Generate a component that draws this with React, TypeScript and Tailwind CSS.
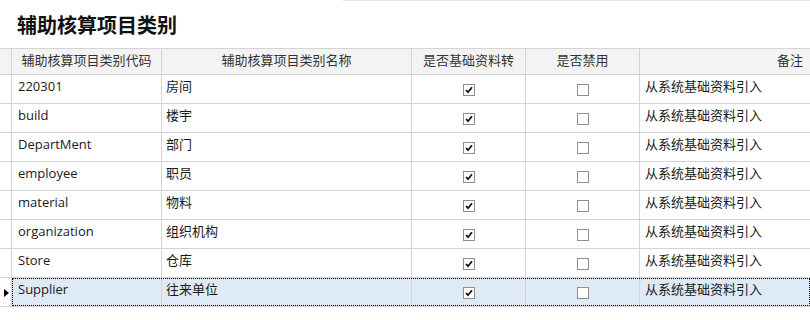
import React from "react";

type Row = { code: string; name: string; base: boolean; disabled: boolean; note: string };

const rows: Row[] = [
  { code: "220301", name: "房间", base: true, disabled: false, note: "从系统基础资料引入" },
  { code: "build", name: "楼宇", base: true, disabled: false, note: "从系统基础资料引入" },
  { code: "DepartMent", name: "部门", base: true, disabled: false, note: "从系统基础资料引入" },
  { code: "employee", name: "职员", base: true, disabled: false, note: "从系统基础资料引入" },
  { code: "material", name: "物料", base: true, disabled: false, note: "从系统基础资料引入" },
  { code: "organization", name: "组织机构", base: true, disabled: false, note: "从系统基础资料引入" },
  { code: "Store", name: "仓库", base: true, disabled: false, note: "从系统基础资料引入" },
  { code: "Supplier", name: "往来单位", base: true, disabled: false, note: "从系统基础资料引入" },
];

const CheckBox = ({ checked }: { checked: boolean }) => (
  <svg width="13" height="13" viewBox="0 0 13 13">
    <rect x="1.5" y="1.5" width="11" height="11" fill="#fff" stroke="#8e8e8e" />
    {checked && <path d="M4 7 L6 9.2 L10 4.2" fill="none" stroke="#111" strokeWidth="1.8" />}
  </svg>
);

export default function App() {
  return (
    <div className="w-[810px] h-[320px] bg-white overflow-hidden relative font-['Open_Sans','Noto_Sans_CJK_SC',sans-serif] text-[13px]">
      <div className="absolute top-0 left-[343px] right-0 h-px bg-[#e6e6e6]" />
      <h1 className="h-[48px] pl-[17px] pt-[11px] text-[20px] leading-[28px] font-bold text-[#111] font-['Noto_Sans_CJK_SC',sans-serif]">
        辅助核算项目类别
      </h1>
      <div className="border-t border-[#d4d4d4]">
        {/* header */}
        <div className="flex h-[26px] bg-[#f3f3f3] border-b border-[#d4d4d4] text-[#333]">
          <div className="w-[12px] shrink-0 border-r border-[#d4d4d4]" />
          <div className="w-[150px] shrink-0 border-r border-[#d4d4d4] flex items-center justify-center pb-[2px]">辅助核算项目类别代码</div>
          <div className="w-[250px] shrink-0 border-r border-[#d4d4d4] flex items-center justify-center pb-[2px]">辅助核算项目类别名称</div>
          <div className="w-[114px] shrink-0 border-r border-[#d4d4d4] flex items-center justify-center pb-[2px]">是否基础资料转</div>
          <div className="w-[114px] shrink-0 border-r border-[#d4d4d4] flex items-center justify-center pb-[2px]">是否禁用</div>
          <div className="flex-1 flex items-center justify-end pr-[7px] pb-[2px]">备注</div>
        </div>
        {rows.map((r, i) => {
          const selected = i === rows.length - 1;
          return (
            <div key={r.code} className="flex h-[29px] border-b border-[#d4d4d4] text-[#1a1a1a]">
              <div className="w-[12px] shrink-0 border-r border-[#d4d4d4] flex items-center">
                {selected && (
                  <svg width="8" height="10" viewBox="0 0 8 10" className="ml-[3px] mt-[1px]">
                    <path d="M1 1 L6 5 L1 9 Z" fill="#000" />
                  </svg>
                )}
              </div>
              <div className={`flex flex-1 ${selected ? "bg-[#deeaf5] outline outline-1 outline-dotted outline-black -outline-offset-1" : ""}`}>
                <div className="w-[150px] shrink-0 border-r border-[#d4d4d4] flex items-center pl-[6px] pb-[4px]">{r.code}</div>
                <div className="w-[250px] shrink-0 border-r border-[#d4d4d4] flex items-center pl-[4px] pb-[4px]">{r.name}</div>
                <div className="w-[114px] shrink-0 border-r border-[#d4d4d4] flex items-center justify-center pt-[1px]">
                  <CheckBox checked={r.base} />
                </div>
                <div className="w-[114px] shrink-0 border-r border-[#d4d4d4] flex items-center justify-center pt-[1px]">
                  <CheckBox checked={r.disabled} />
                </div>
                <div className="flex-1 flex items-center pl-[5px] pb-[4px]">{r.note}</div>
              </div>
            </div>
          );
        })}
      </div>
    </div>
  );
}
